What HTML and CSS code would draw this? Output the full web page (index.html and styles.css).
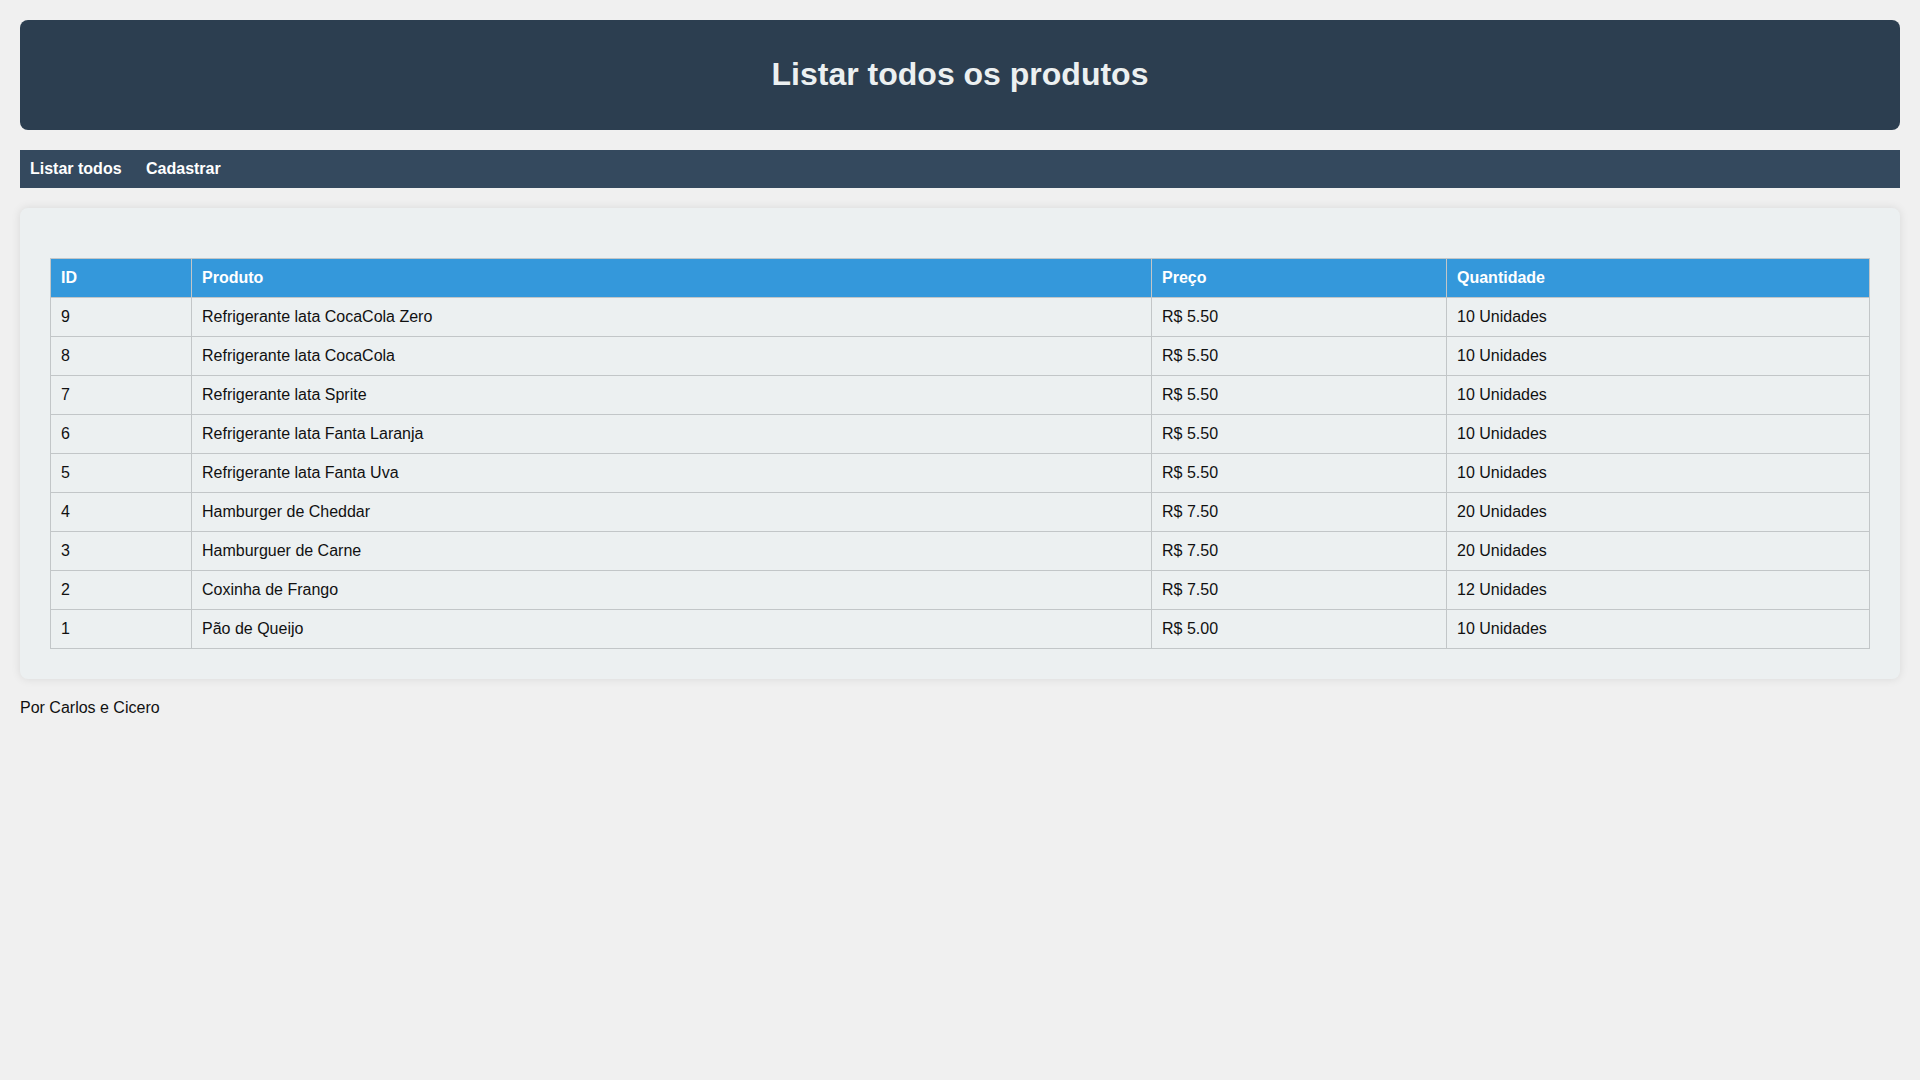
FILE: index.html
```html
<!DOCTYPE html>
<html lang="pt-BR">
<head>
<meta charset="utf-8">
<title>Listar todos os produtos</title>
<link rel="stylesheet" href="styles.css">
</head>
<body>
<header class="topo">
  <h1 class="titulo">Listar todos os produtos</h1>
</header>
<nav class="menu">
  <a class="menu-link" href="#">Listar todos</a>
  <a class="menu-link" href="#">Cadastrar</a>
</nav>
<main class="cartao">
  <table class="tabela">
    <thead>
      <tr>
        <th class="col-id">ID</th>
        <th class="col-produto">Produto</th>
        <th class="col-preco">Preço</th>
        <th class="col-qtd">Quantidade</th>
      </tr>
    </thead>
    <tbody>
      <tr><td>9</td><td>Refrigerante lata CocaCola Zero</td><td>R$ 5.50</td><td>10 Unidades</td></tr>
      <tr><td>8</td><td>Refrigerante lata CocaCola</td><td>R$ 5.50</td><td>10 Unidades</td></tr>
      <tr><td>7</td><td>Refrigerante lata Sprite</td><td>R$ 5.50</td><td>10 Unidades</td></tr>
      <tr><td>6</td><td>Refrigerante lata Fanta Laranja</td><td>R$ 5.50</td><td>10 Unidades</td></tr>
      <tr><td>5</td><td>Refrigerante lata Fanta Uva</td><td>R$ 5.50</td><td>10 Unidades</td></tr>
      <tr><td>4</td><td>Hamburger de Cheddar</td><td>R$ 7.50</td><td>20 Unidades</td></tr>
      <tr><td>3</td><td>Hamburguer de Carne</td><td>R$ 7.50</td><td>20 Unidades</td></tr>
      <tr><td>2</td><td>Coxinha de Frango</td><td>R$ 7.50</td><td>12 Unidades</td></tr>
      <tr><td>1</td><td>Pão de Queijo</td><td>R$ 5.00</td><td>10 Unidades</td></tr>
    </tbody>
  </table>
</main>
<footer class="rodape">Por Carlos e Cicero</footer>
</body>
</html>
```

FILE: styles.css
```css
* { box-sizing: border-box; }

html, body {
  margin: 0;
  padding: 0;
}

body {
  background: #f0f0f0;
  font-family: "Liberation Sans", Arial, sans-serif;
  font-size: 16px;
  color: #111;
  padding: 20px;
}

.topo {
  background: #2c3e50;
  border-radius: 8px;
  height: 110px;
  display: flex;
  align-items: center;
  justify-content: center;
  padding-bottom: 2px;
}

.titulo {
  margin: 0;
  color: #ecf0f1;
  font-size: 32px;
  font-weight: bold;
  line-height: 37px;
}

.menu {
  margin-top: 20px;
  background: #34495e;
  padding: 0;
}

.menu-link {
  display: inline-block;
  padding: 10px 10px;
  color: #fff;
  font-weight: bold;
  text-decoration: none;
  line-height: 18px;
}

.cartao {
  display: block;
  margin-top: 20px;
  background: #ecf0f1;
  border-radius: 8px;
  padding: 50px 30px 30px;
  box-shadow: 0 0 10px rgba(0, 0, 0, 0.1);
}

.tabela {
  width: 100%;
  border-collapse: collapse;
}

.tabela th,
.tabela td {
  border: 1px solid #c2c6c8;
  padding: 10px 10px;
  text-align: left;
  line-height: 18px;
}

.tabela th {
  background: #3498db;
  color: #fff;
  font-weight: bold;
}

.col-id { width: 141px; }
.col-produto { width: 960px; }
.col-preco { width: 295px; }

.rodape {
  margin-top: 20px;
  line-height: 18px;
}
```
